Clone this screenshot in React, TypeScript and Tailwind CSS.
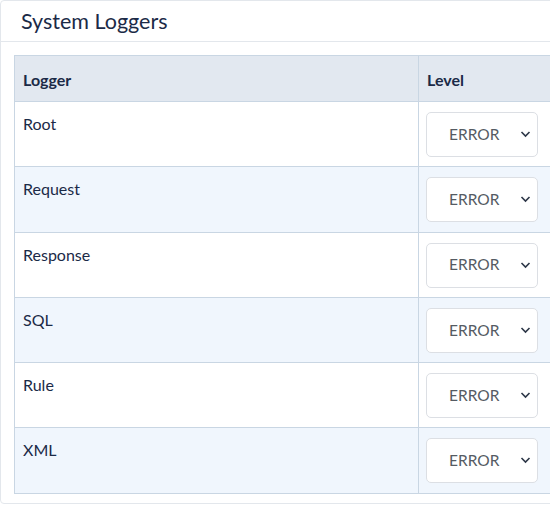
import React from "react";

const loggers = ["Root", "Request", "Response", "SQL", "Rule", "XML"];

function LevelSelect() {
  return (
    <div className="relative w-[112px] h-[45px]">
      <select
        defaultValue="ERROR"
        className="appearance-none w-full h-full rounded-[5px] border border-[#dcdfe4] bg-white pl-[22px] pr-6 text-[15.5px] text-[#555b63] outline-none"
      >
        <option>ERROR</option>
        <option>WARN</option>
        <option>INFO</option>
        <option>DEBUG</option>
      </select>
      <svg
        className="pointer-events-none absolute right-[7px] top-[18px]"
        width="11"
        height="8"
        viewBox="0 0 11 8"
        fill="none"
      >
        <path d="M1.5 2l4 4 4-4" stroke="#2d3748" strokeWidth="1.6" />
      </svg>
    </div>
  );
}

export default function App() {
  return (
    <div className="w-[550px] h-[505px] overflow-hidden bg-white font-['Lato',sans-serif] text-[#1b2a47]">
      <div className="w-[580px] h-[504px] border border-[#e3e7ec] rounded-[4px]">
        {/* Header */}
        <div className="h-[41px] border-b border-[#e3e7ec] pl-[20px] pt-[6px]">
          <h2 className="text-[21.5px] leading-[28px]">System Loggers</h2>
        </div>

        {/* Table */}
        <div className="pl-[13px] pt-[13px]">
          <table className="border-collapse w-[560px] text-[16px]">
            <thead>
              <tr className="bg-[#e2e8f0] h-[46px]">
                <th className="w-[404px] border border-[#c9d6e3] px-[8px] pt-[2px] text-left font-bold">Logger</th>
                <th className="border border-[#c9d6e3] px-[8px] pt-[2px] text-left font-bold">Level</th>
              </tr>
            </thead>
            <tbody>
              {loggers.map((name, i) => (
                <tr key={name} className={i % 2 === 1 ? "bg-[#f0f6fd]" : "bg-white"}>
                  <td className="h-[65.3px] border border-[#c9d6e3] px-[8px] pt-[12px] align-top leading-[20px]">{name}</td>
                  <td className="border border-[#c9d6e3] pl-[7px] pt-[10px] pb-0 align-top">
                    <LevelSelect />
                  </td>
                </tr>
              ))}
            </tbody>
          </table>
        </div>
      </div>
    </div>
  );
}
